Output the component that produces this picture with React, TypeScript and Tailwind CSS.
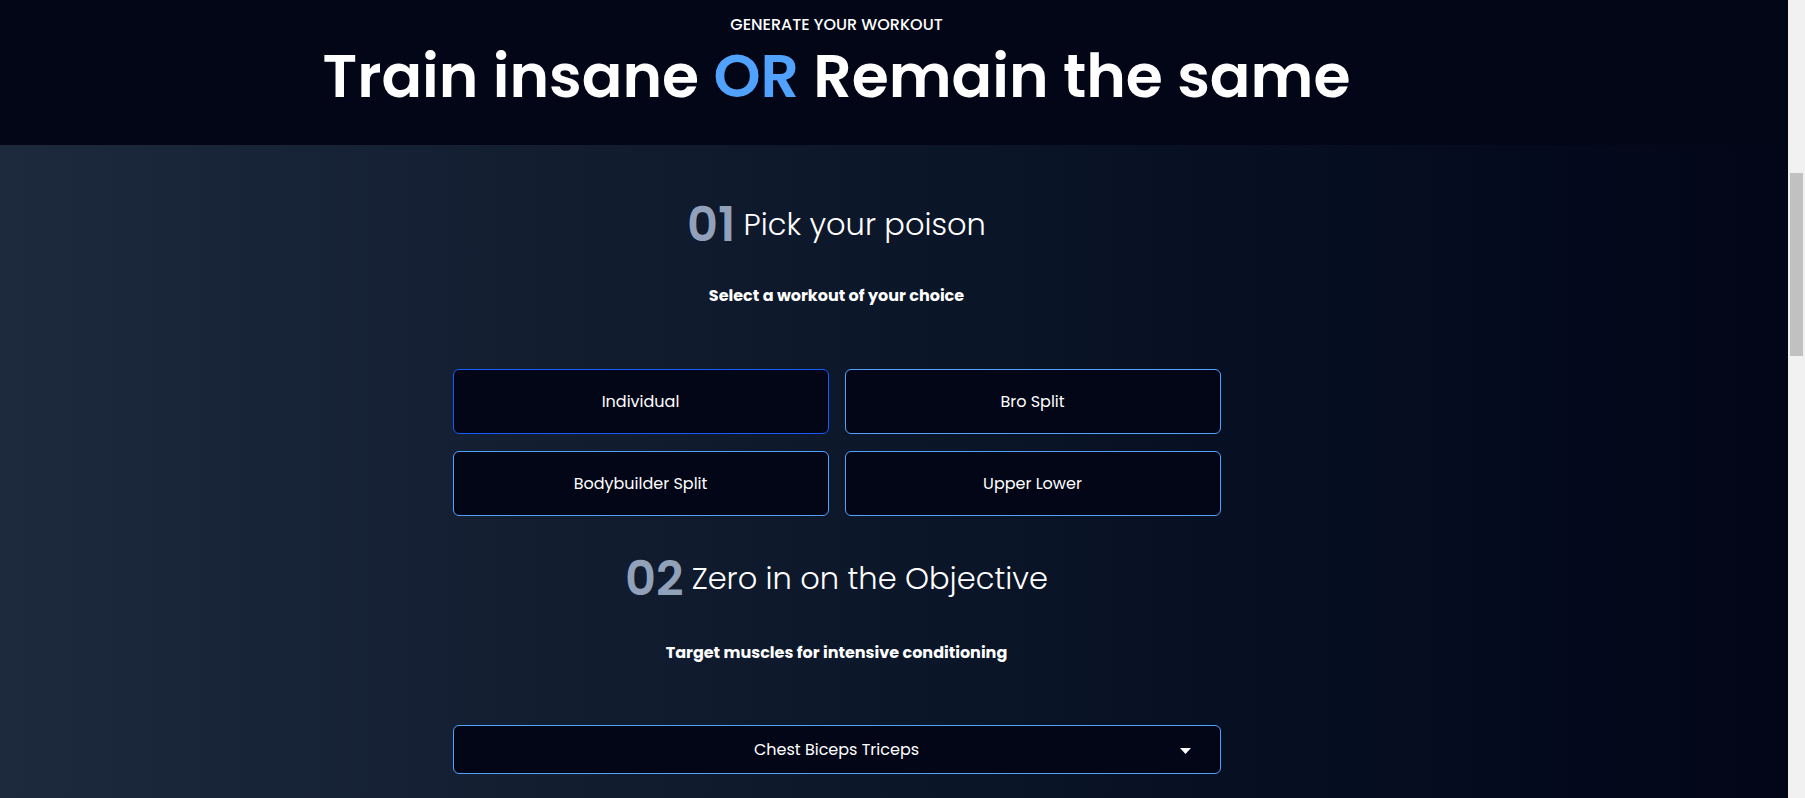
const workouts = ['Individual', 'Bro Split', 'Bodybuilder Split', 'Upper Lower'];

const StepHeader = ({ num, title }: { num: string; title: string }) => (
  <div className="flex items-center gap-2">
    <span className="text-5xl leading-none font-semibold text-slate-400">{num}</span>
    <span className="text-[30.5px] leading-none font-light text-white">{title}</span>
  </div>
);

const App = () => {
  return (
    <div
      className="flex h-[798px] w-full overflow-hidden"
      style={{ fontFamily: 'Poppins, Inter, "Noto Sans", sans-serif' }}
    >
      <div className="flex-1 flex flex-col">
        {/* Hero strip */}
        <header className="h-[145px] bg-[#020617] flex flex-col items-center pt-[13px] pr-[115px]">
          <p className="text-base leading-6 font-medium text-white uppercase">Generate your workout</p>
          <h1 className="mt-[9px] text-[60px] leading-none font-semibold text-white">
            Train insane <span className="text-blue-400">OR</span> Remain the same
          </h1>
        </header>

        <section className="flex-1 bg-gradient-to-r from-slate-800 to-slate-950 flex flex-col items-center pr-[115px] pt-[56px]">
          <StepHeader num="01" title="Pick your poison" />
          <p className="mt-[35px] text-base leading-6 font-bold text-white">Select a workout of your choice</p>

          <div className="mt-[61px] grid grid-cols-2 gap-x-4 gap-y-[17px] w-[768px]">
            {workouts.map((w, i) => (
              <button
                key={w}
                className={`h-[65px] rounded-md bg-[#020617] border text-base text-white ${
                  i === 0 ? 'border-blue-600' : 'border-blue-400'
                }`}
              >
                {w}
              </button>
            ))}
          </div>

          <div className="mt-[39px]">
            <StepHeader num="02" title="Zero in on the Objective" />
          </div>
          <p className="mt-[38px] text-base leading-6 font-bold text-white">Target muscles for intensive conditioning</p>

          <div className="relative mt-[60px] w-[768px] h-[49px] rounded-md border border-blue-400 bg-[#020617] flex items-center justify-center text-base text-white">
            Chest Biceps Triceps
            <svg className="absolute right-[29px] top-[22px]" width="11" height="6" viewBox="0 0 11 6">
              <path d="M0 0h11L5.5 6z" fill="white" />
            </svg>
          </div>
        </section>
      </div>

      {/* browser scrollbar */}
      <div className="w-[17px] bg-[#f1f1f1] pt-[173px] flex justify-center">
        <div className="w-[13px] h-[183px] bg-[#c1c1c1]" />
      </div>
    </div>
  );
};

export default App;
